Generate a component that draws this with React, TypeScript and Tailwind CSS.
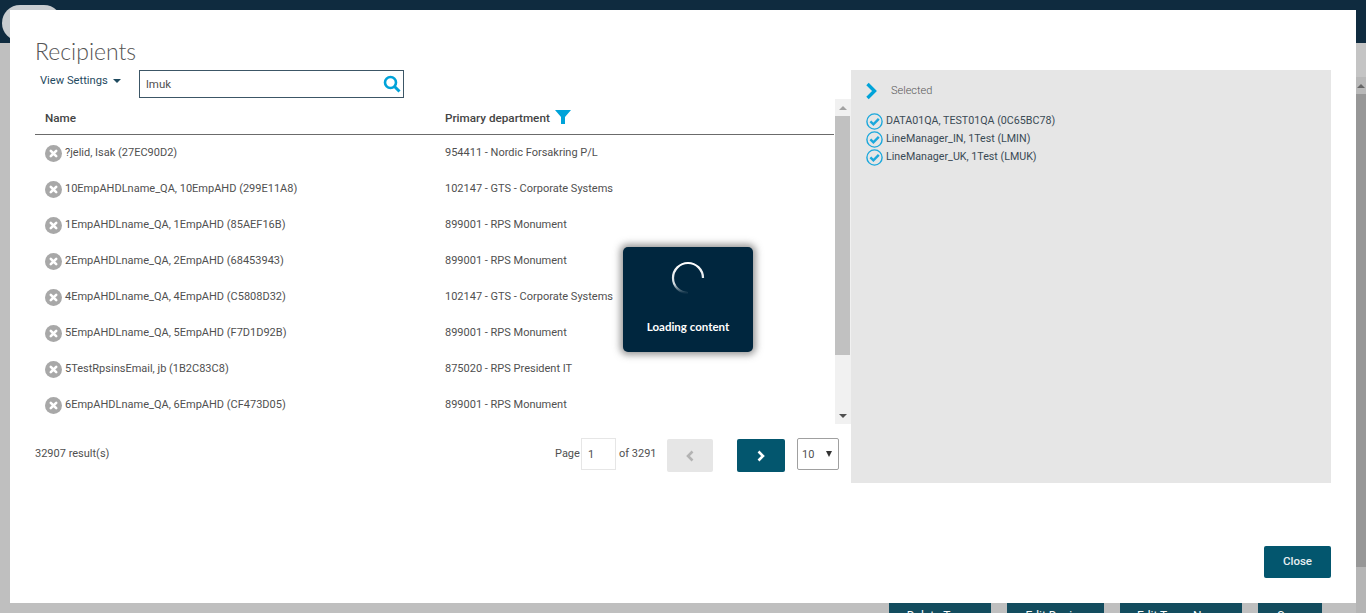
const rows = [
  ["?jelid, Isak (27EC90D2)", "954411 - Nordic Forsakring P/L"],
  ["10EmpAHDLname_QA, 10EmpAHD (299E11A8)", "102147 - GTS - Corporate Systems"],
  ["1EmpAHDLname_QA, 1EmpAHD (85AEF16B)", "899001 - RPS Monument"],
  ["2EmpAHDLname_QA, 2EmpAHD (68453943)", "899001 - RPS Monument"],
  ["4EmpAHDLname_QA, 4EmpAHD (C5808D32)", "102147 - GTS - Corporate Systems"],
  ["5EmpAHDLname_QA, 5EmpAHD (F7D1D92B)", "899001 - RPS Monument"],
  ["5TestRpsinsEmail, jb (1B2C83C8)", "875020 - RPS President IT"],
  ["6EmpAHDLname_QA, 6EmpAHD (CF473D05)", "899001 - RPS Monument"],
];

const selected = [
  "DATA01QA, TEST01QA (0C65BC78)",
  "LineManager_IN, 1Test (LMIN)",
  "LineManager_UK, 1Test (LMUK)",
];

const RemoveIcon = () => (
  <svg width="17" height="17" viewBox="0 0 17 17" className="mt-[1px] shrink-0">
    <circle cx="8.5" cy="8.5" r="8.5" fill="#a8a8a8" />
    <path d="M5.8 5.8l5.4 5.4M11.2 5.8l-5.4 5.4" stroke="#fff" strokeWidth="2.6" strokeLinecap="round" />
  </svg>
);

const CheckIcon = () => (
  <svg width="17" height="17" viewBox="0 0 17 17" className="shrink-0">
    <circle cx="8.5" cy="8.5" r="7.6" fill="none" stroke="#1ba8dc" strokeWidth="1.4" />
    <path d="M4.4 8.4l3 3 5.4-5.6" fill="none" stroke="#1ba8dc" strokeWidth="2.4" />
  </svg>
);

const Spinner = () => (
  <svg width="34" height="34" viewBox="0 0 34 34">
    <defs>
      <linearGradient id="spin" x1="0" y1="0" x2="0" y2="1">
        <stop offset="0" stopColor="#ffffff" />
        <stop offset="0.7" stopColor="#d5dde2" />
        <stop offset="1" stopColor="#0a2e45" />
      </linearGradient>
    </defs>
    <path d="M32 17A15 15 0 1 0 17 32" fill="none" stroke="url(#spin)" strokeWidth="2.2" />
  </svg>
);

export default function App() {
  return (
    <div className="relative flex h-[613px] w-[1366px] flex-col overflow-hidden bg-[#bfbfbf] font-['Roboto',sans-serif] text-[11px] text-[#505050]">
      {/* page behind the dialog */}
      <div className="h-[43px] bg-[#0f2b3f]">
        <div className="ml-[2px] mt-[5px] h-[36px] w-[60px] rounded-full bg-[#c9cdd0]" />
      </div>
      <div className="mt-auto flex justify-end gap-4 pr-[44px]">
        {[
          ["Delete Team", "w-[102px]"],
          ["Edit Design", "w-[97px]"],
          ["Edit Team Name", "w-[122px]"],
          ["Save", "w-[64px]"],
        ].map(([label, w]) => (
          <div key={label} className={`h-[10px] overflow-hidden bg-[#134c5e] pt-[5px] text-center text-[12px] leading-[16px] text-white ${w}`}>
            {label}
          </div>
        ))}
      </div>

      {/* page scrollbar */}
      <div className="absolute bottom-0 right-0 top-[43px] flex w-[10px] flex-col bg-[#b5b5b5]">
        <div className="h-[34px] bg-[#c4c4c4]" />
        <div className="flex h-[17px] items-center justify-center bg-[#b8b8b8]">
          <div className="h-0 w-0 border-x-[4px] border-b-[4px] border-x-transparent border-b-[#666]" />
        </div>
        <div className="h-[473px] bg-[#979797]" />
      </div>

      {/* dialog */}
      <div className="absolute left-[10px] top-[10px] flex h-[593px] w-[1346px] flex-col bg-white pl-[25px] pr-[25px]">
        <h1 className="mt-[26px] h-[34px] font-['Lato',sans-serif] text-[23px] font-light leading-[30px] text-[#555]">Recipients</h1>
        <div className="flex gap-0">
          <div className="flex w-[816px] flex-col">
            <div className="flex h-[29px] items-start">
              <button className="mt-[3px] flex w-[104px] items-center gap-[5px] pl-[5px] text-[11.2px] text-[#1f4a5f]">
                View Settings
                <span className="h-0 w-0 border-x-[4px] border-t-[4px] border-x-transparent border-t-[#1f4a5f]" />
              </button>
              <div className="flex h-[28px] w-[265px] items-center justify-between border border-[#3c5666] pl-[6px] pr-[2px]">
                <span className="mt-[1px] text-[11.5px]">lmuk</span>
                <svg width="18" height="18" viewBox="0 0 18 18">
                  <circle cx="7.5" cy="7.5" r="5.5" fill="none" stroke="#00a3d9" strokeWidth="2.6" />
                  <path d="M11.5 11.5l5 5" stroke="#00a3d9" strokeWidth="3" />
                </svg>
              </div>
            </div>
            <div className="flex">
              <div className="w-[799px]">
                <div className="flex h-[36px] items-center border-b border-[#6b6b6b] pt-[2px] text-[11.7px] font-medium text-[#444]">
                  <div className="mt-[2px] w-[410px] pl-[10px]">Name</div>
                  <div className="mt-[2px] flex items-center gap-[5px]">
                    Primary department
                    <svg width="16" height="14" viewBox="0 0 16 14" className="mb-[3px]">
                      <path d="M0 0h16L10 7v7H6V7z" fill="#00a3d9" />
                    </svg>
                  </div>
                </div>
                <div className="h-[289px] overflow-hidden">
                  {rows.map(([name, dept]) => (
                    <div key={name} className="flex h-[36px] items-center">
                      <div className="flex w-[410px] items-center gap-[3px] pl-[10px]">
                        <RemoveIcon />
                        {name}
                      </div>
                      <div>{dept}</div>
                    </div>
                  ))}
                </div>
              </div>
              <div className="ml-[1px] flex h-[325px] w-[16px] flex-col bg-[#f1f1f1]">
                <div className="flex h-[17px] items-center justify-center">
                  <div className="h-0 w-0 border-x-[4px] border-b-[4px] border-x-transparent border-b-[#a3a3a3]" />
                </div>
                <div className="h-[239px] w-[15px] bg-[#c1c1c1]" />
                <div className="mt-auto flex h-[17px] items-center justify-center">
                  <div className="h-0 w-0 border-x-[4px] border-t-[4px] border-x-transparent border-t-[#505050]" />
                </div>
              </div>
            </div>
            <div className="mt-[14px] flex h-[34px] items-start leading-[31px]">
              <div className="w-[520px]">32907 result(s)</div>
              <span className="w-[26px]">Page</span>
              <div className="flex h-[32px] w-[35px] items-center border border-[#e6e6e6] pl-[6px]">1</div>
              <span className="ml-[3px] w-[48px]">of 3291</span>
              <button className="mt-[1px] flex h-[33px] w-[46px] items-center justify-center rounded-[2px] bg-[#e6e6e6]">
                <svg width="10" height="12" viewBox="0 0 10 12">
                  <path d="M7.5 1.5L3 6l4.5 4.5" fill="none" stroke="#b3b3b3" strokeWidth="2.6" />
                </svg>
              </button>
              <button className="ml-[24px] mt-[1px] flex h-[33px] w-[48px] items-center justify-center rounded-[2px] bg-[#03566e]">
                <svg width="10" height="12" viewBox="0 0 10 12">
                  <path d="M2.5 1.5L7 6l-4.5 4.5" fill="none" stroke="#fff" strokeWidth="2.6" />
                </svg>
              </button>
              <div className="ml-[12px] flex h-[32px] w-[42px] items-center justify-between rounded-[2px] border border-[#a0a0a0] pl-[4px] pr-[6px]">
                <span>10</span>
                <span className="h-0 w-0 border-x-[3.5px] border-t-[6px] border-x-transparent border-t-[#333]" />
              </div>
            </div>
          </div>

          <div className="h-[413px] w-[480px] bg-[#e6e6e6] pl-[14px]">
            <div className="flex h-[41px] items-center pt-[1px]">
              <svg width="14" height="18" viewBox="0 0 14 18">
                <path d="M2.5 2l7 7-7 7" fill="none" stroke="#00a3d9" strokeWidth="3.4" />
              </svg>
              <span className="ml-[12px] text-[11px] font-light text-[#555]">Selected</span>
            </div>
            <div className="pt-[1px]">
              {selected.map((s) => (
                <div key={s} className="flex h-[18px] items-center gap-[3px] pl-[1px] text-[10.7px] text-[#3a4a55]">
                  <CheckIcon />
                  {s}
                </div>
              ))}
            </div>
          </div>
        </div>
        <div className="mt-[63px] flex justify-end">
          <button className="h-[32px] w-[67px] rounded-[2px] bg-[#03566e] text-[11.5px] font-medium text-[#e8f0f3]">Close</button>
        </div>
      </div>

      {/* loading toast */}
      <div className="absolute left-[623px] top-[247px] flex h-[105px] w-[130px] flex-col items-center rounded-[5px] bg-[#00263e] pt-[14px] text-white shadow-[0_0_7px_3px_rgba(70,70,70,0.55)]">
        <Spinner />
        <div className="mt-[23px] font-['Lato',sans-serif] text-[11.5px] font-bold">Loading content</div>
      </div>
    </div>
  );
}
